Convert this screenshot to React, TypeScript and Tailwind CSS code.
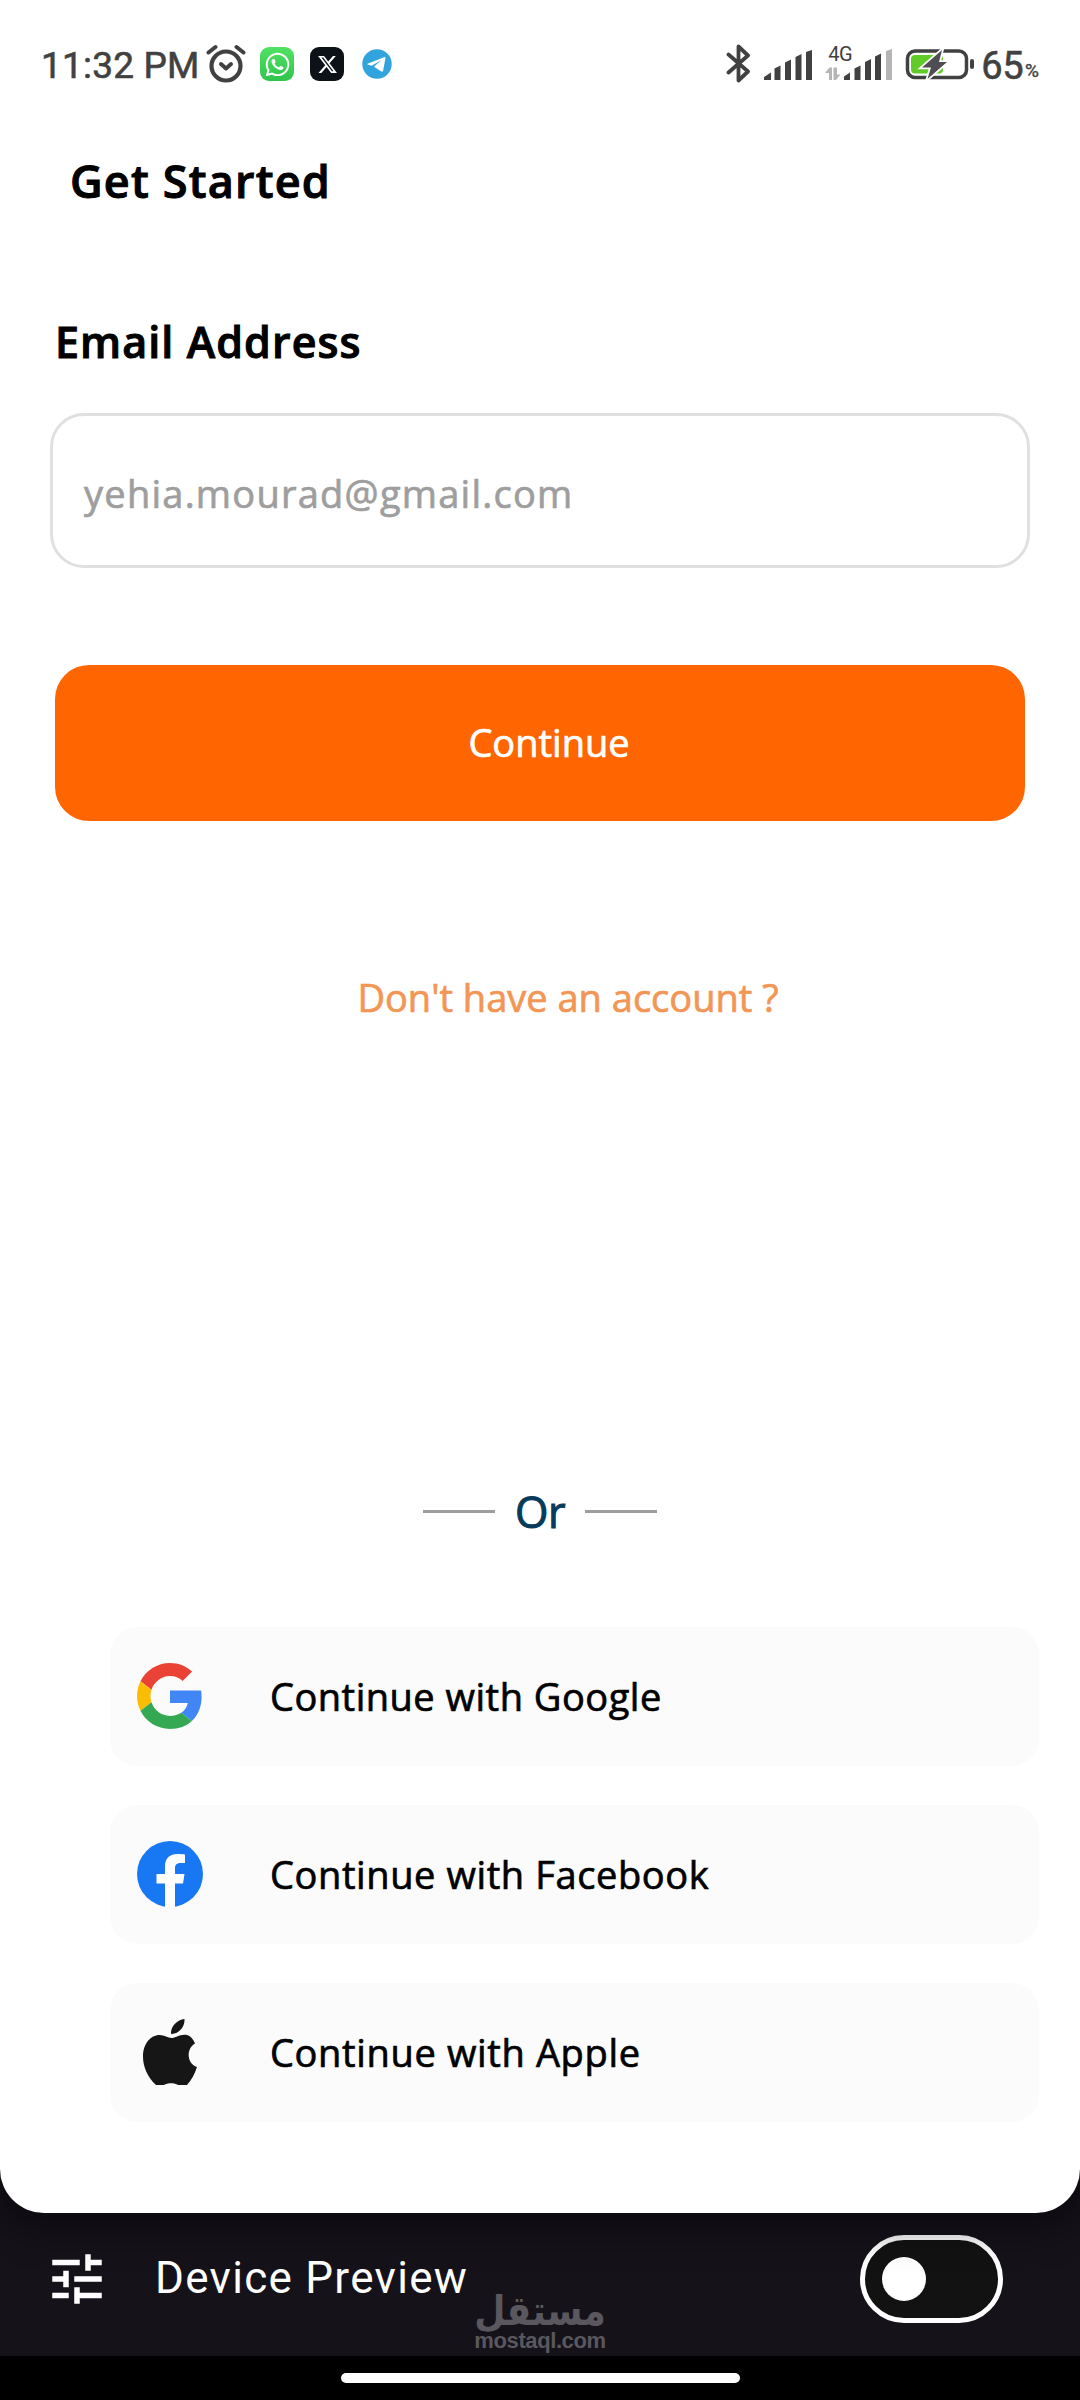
import { FaWhatsapp } from 'react-icons/fa';
import { FaXTwitter } from 'react-icons/fa6';
import { MdTune } from 'react-icons/md';

function GoogleIcon() {
  return (
    <svg viewBox="0 0 48 48" className="h-[66px] w-[66px]">
      <path fill="#EA4335" d="M24 9.5c3.54 0 6.71 1.22 9.21 3.6l6.85-6.85C35.9 2.38 30.47 0 24 0 14.62 0 6.51 5.38 2.56 13.22l7.98 6.19C12.43 13.72 17.74 9.5 24 9.5z" />
      <path fill="#4285F4" d="M46.98 24.55c0-1.57-.15-3.09-.38-4.55H24v9.02h12.94c-.58 2.96-2.26 5.48-4.78 7.18l7.73 6c4.51-4.18 7.09-10.36 7.09-17.65z" />
      <path fill="#FBBC05" d="M10.53 28.59A14.5 14.5 0 0 1 9.77 24c0-1.6.27-3.14.76-4.59l-7.98-6.19A23.99 23.99 0 0 0 0 24c0 3.88.92 7.54 2.56 10.78l7.97-6.19z" />
      <path fill="#34A853" d="M24 48c6.48 0 11.93-2.13 15.89-5.81l-7.73-6c-2.15 1.45-4.92 2.3-8.16 2.3-6.26 0-11.57-4.22-13.47-9.91l-7.98 6.19C6.51 42.62 14.62 48 24 48z" />
    </svg>
  );
}

function FacebookIcon() {
  return (
    <svg viewBox="0 0 66 66" className="h-[66px] w-[66px]">
      <circle cx="33" cy="33" r="33" fill="#1877F2" />
      <path fill="#fff" d="M28 66V42.500h-8.500v-9.500H28v-7.500c0-8.500 5-12.500 12.500-12.500 3.500 0 7.500.500 7.500.500v8.500h-4.500c-4.200 0-5.500 2.500-5.500 5.200V33h9.500l-1.500 9.500h-8V66z" />
    </svg>
  );
}

function AppleIcon() {
  return (
    <svg viewBox="0 0 54 66" className="h-[66px] w-[54px]">
      <path fill="#161616" d="M41.500 0c.5 7.500-5.500 15-13.500 15C27.500 7.500 34 .8 41.500 0zM52 24.500c-9 5.500-8.500 19.500 2 23.500-2.200 7-5.500 13-10 18H35c-3.500-2.300-10.500-2.300-14 0h-8C4.500 58 0 48 0 37.500 0 25 7.500 16 16.500 16c5 0 8.500 3 12 3s7.500-3.300 13-3.300c4.200 0 8 2.500 10.500 8.800z" />
    </svg>
  );
}

const providers = [
  { name: 'Google', icon: <GoogleIcon />, tracking: 'tracking-[0.5px]' },
  { name: 'Facebook', icon: <FacebookIcon />, tracking: 'tracking-[0.6px]' },
  { name: 'Apple', icon: <AppleIcon />, tracking: 'tracking-[0.65px]' },
];

function StatusBar() {
  return (
    <div className="flex h-[151px] items-start justify-between pl-[41px] pr-[41px] pt-[44px] font-['Roboto',sans-serif] text-[#414141]">
      <div className="flex h-[40px] items-center">
        <span className="mt-[4px] w-[165px] whitespace-nowrap text-[37px] leading-[44px] tracking-[0.2px] [-webkit-text-stroke:0.6px_currentColor]">
          11:32 PM
        </span>
        <svg viewBox="0 0 40 40" className="h-[40px] w-[40px]" fill="none" stroke="currentColor" strokeLinecap="round">
          <circle cx="20" cy="22" r="14.500" strokeWidth="4.200" />
          <path d="M15 20l5 4.500 5-4.500" strokeWidth="4" strokeLinejoin="round" />
          <path d="M2.500 8.500L9.500 3M37.500 8.500L30.500 3" strokeWidth="4" />
        </svg>
        <div className="ml-[14px] flex h-[34px] w-[34px] items-center justify-center rounded-[9px] bg-gradient-to-b from-[#4fe263] to-[#2fc44d] text-white">
          <FaWhatsapp className="h-[27px] w-[27px]" />
        </div>
        <div className="ml-[16px] flex h-[34px] w-[34px] items-center justify-center rounded-[9px] bg-[#0c1217] text-white">
          <FaXTwitter className="h-[21px] w-[21px]" />
        </div>
        <svg viewBox="0 0 30 30" className="ml-[18px] h-[30px] w-[30px]">
          <circle cx="15" cy="15" r="14.700" fill="#31a3dd" />
          <path fill="#fff" d="M5.500 14.800L22 8.200c1-.4 1.600.1 1.400 1.200l-2.300 12.300c-.2 1-.9 1.300-1.700.8L12 17.800l7-6.500-9.300 5.500-4-1.200c-.7-.2-.7-.6-.2-.8z" />
        </svg>
      </div>

      <div className="flex h-[40px] items-center">
        <svg viewBox="0 0 26 40" className="h-[40px] w-[26px]" fill="none" stroke="currentColor" strokeWidth="3.800" strokeLinecap="round" strokeLinejoin="round">
          <path d="M2.500 10.500L22 27.500 12.500 36.500V2.500L22 11.500 2.500 28.500" />
        </svg>
        <svg viewBox="0 0 48 30" className="ml-[12px] mt-[2px] h-[30px] w-[48px]" fill="currentColor">
          <path d="M0 27l7-4.500V30H0zM10.500 18.500l6-3V30h-6zM21 12.500l6-3V30h-6zM31.500 7l6-3V30h-6zM42 2l6-2v30h-6z" />
        </svg>
        <div className="ml-[12px] h-[40px] w-[68px]">
          <div className="h-[18px] pl-[4px] text-[20px] leading-[20px] tracking-[-0.5px]">4G</div>
          <svg viewBox="0 0 68 32" className="mt-[-14px] h-[32px] w-[68px]" fill="currentColor">
            <path fill="#b5b5b5" d="M62 3l6-2v31h-6zM1 25l4.500-5.500H8V32H5v-7zM9.500 19.500V32H12l4.500-5.500H13v-7z" />
            <path d="M20 28.500l6-4V32h-6zM30.500 20.500l6-3V32h-6zM41 14l6-3V32h-6zM51 8.500l6-3V32h-6z" />
          </svg>
        </div>
        <svg viewBox="0 0 70 40" className="ml-[12px] h-[40px] w-[70px]">
          <rect x="3.500" y="7" width="59" height="26.500" rx="7.500" fill="none" stroke="#414141" strokeWidth="3.500" />
          <rect x="7" y="11" width="32" height="18.500" rx="4" fill="#61cb28" />
          <rect x="66" y="15" width="4" height="10" rx="2" fill="#414141" />
          <path d="M38 6L18 23.500h9L23.500 35 43 18h-8z" fill="#4d4d52" stroke="#fff" strokeWidth="3.500" paintOrder="stroke" />
        </svg>
        <span className="ml-[7px] mt-[4px] text-[38px] leading-[44px] tracking-[-0.5px] [-webkit-text-stroke:0.6px_currentColor]">65</span>
        <span className="ml-[2px] mt-[14px] text-[19px] leading-[22px] [-webkit-text-stroke:0.4px_currentColor]">%</span>
      </div>
    </div>
  );
}

export default function App() {
  return (
    <div className="flex h-[2400px] w-[1080px] flex-col overflow-hidden bg-[#15121a] font-['Open_Sans','Noto_Sans',sans-serif]">
      <main className="z-10 h-[2213px] shrink-0 rounded-b-[44px] bg-white shadow-[0_6px_40px_8px_rgba(0,0,0,0.45)]">
        <StatusBar />

        <h1 className="pl-[70px] text-[45px] font-semibold leading-[60px] tracking-[1.2px] text-black [-webkit-text-stroke:1px_currentColor]">
          Get Started
        </h1>

        <form className="mt-[101px]">
          <label className="block pl-[55px] text-[43px] font-semibold leading-[60px] tracking-[1.1px] text-black [-webkit-text-stroke:1px_currentColor]">
            Email Address
          </label>
          <div className="mx-[50px] mt-[41px] flex h-[155px] items-center rounded-[34px] border-[3px] border-[#e0e0e0] pl-[31px] pt-[4px]">
            <span className="text-[38px] leading-[60px] tracking-[1.25px] text-[#9e9e9e] [-webkit-text-stroke:0.7px_currentColor]">
              yehia.mourad@gmail.com
            </span>
          </div>
          <button
            type="button"
            className="mx-[55px] mt-[97px] flex h-[156px] w-[970px] items-center justify-center rounded-[34px] bg-[#ff6500] pb-[3px] pl-[18px] text-[38px] leading-[60px] text-white [-webkit-text-stroke:0.7px_currentColor]"
          >
            Continue
          </button>
        </form>

        <a className="mt-[146px] block pl-[56px] text-center text-[38px] leading-[60px] text-[#f39655] [-webkit-text-stroke:0.7px_currentColor]">
          Don't have an account ?
        </a>

        <div className="mt-[454px] flex items-center justify-center">
          <span className="h-[3px] w-[72px] bg-[#9e9e9e]" />
          <span className="w-[90px] pt-px text-center text-[43px] leading-[60px] tracking-[-0.5px] text-[#073b5c] [-webkit-text-stroke:1px_currentColor]">Or</span>
          <span className="h-[3px] w-[72px] bg-[#9e9e9e]" />
        </div>

        <div className="ml-[110px] mr-[41px] mt-[85px] flex flex-col gap-[39.5px]">
          {providers.map((provider) => (
            <button
              key={provider.name}
              type="button"
              className="flex h-[138.500px] items-center rounded-[27px] bg-[#fbfbfb] pl-[27px] text-[38px] leading-[60px] text-black [-webkit-text-stroke:0.7px_currentColor]"
            >
              <span className="flex w-[66px] justify-center">{provider.icon}</span>
              <span className={`ml-[67px] whitespace-nowrap pb-px ${provider.tracking}`}>Continue with {provider.name}</span>
            </button>
          ))}
        </div>
      </main>

      <div className="relative flex h-[143px] shrink-0 items-start pl-[44px] pr-[77px] font-['Roboto',sans-serif] text-white">
        <MdTune className="mt-[33px] h-[66px] w-[66px]" />
        <span className="ml-[45px] mt-[35px] text-[44px] leading-[60px] tracking-[1.300px]">Device Preview</span>
        <div className="ml-auto mt-[22px] flex h-[88px] w-[143px] items-center rounded-full border-[5.500px] border-white bg-[#121212] pl-[17px]">
          <div className="h-[44px] w-[44px] rounded-full bg-white" />
        </div>
        {/* watermark */}
        <div className="absolute left-[475px] top-[79px] flex w-[130px] flex-col items-center text-[#5a585e]">
          <span dir="rtl" className="scale-y-[1.15] font-['DejaVu_Sans',sans-serif] text-[36px] font-bold leading-[37px]">
            مستقل
          </span>
          <span className="whitespace-nowrap font-['Liberation_Sans',sans-serif] text-[22px] font-bold leading-[24px] tracking-[-0.4px]">mostaql.com</span>
        </div>
      </div>

      <div className="flex h-[44px] shrink-0 justify-center bg-black pt-[17px]">
        <div className="h-[10px] w-[399px] rounded-full bg-white" />
      </div>
    </div>
  );
}
